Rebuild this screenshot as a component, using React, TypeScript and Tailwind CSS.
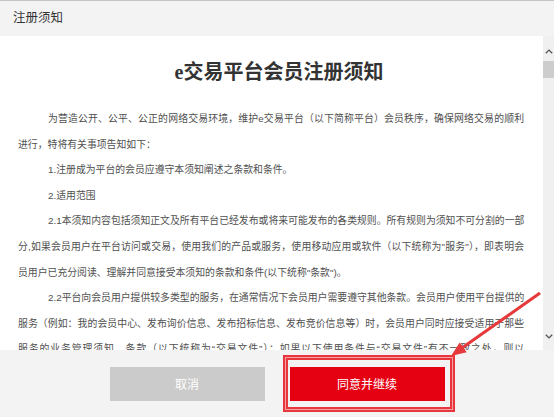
import React from "react";

type Line = { text: string; indent?: boolean; full?: boolean };

// agreement body, one entry per rendered line
const lines: Line[] = [
  { text: "为营造公开、公平、公正的网络交易环境，维护e交易平台（以下简称平台）会员秩序，确保网络交易的顺利", indent: true, full: true },
  { text: "进行，特将有关事项告知如下：" },
  { text: "1.注册成为平台的会员应遵守本须知阐述之条款和条件。", indent: true },
  { text: "2.适用范围", indent: true },
  { text: "2.1本须知内容包括须知正文及所有平台已经发布或将来可能发布的各类规则。所有规则为须知不可分割的一部", indent: true, full: true },
  { text: "分,如果会员用户在平台访问或交易，使用我们的产品或服务，使用移动应用或软件（以下统称为\"服务\"），即表明会", full: true },
  { text: "员用户已充分阅读、理解并同意接受本须知的条款和条件(以下统称\"条款\")。" },
  { text: "2.2平台向会员用户提供较多类型的服务，在通常情况下会员用户需要遵守其他条款。会员用户使用平台提供的", indent: true, full: true },
  { text: "服务（例如：我的会员中心、发布询价信息、发布招标信息、发布竞价信息等）时，会员用户同时应接受适用于那些", full: true },
  { text: "服务的业务管理须知、条款（以下统称为“交易文件”）；如果以下使用条件与“交易文件”有不一致之处，则以", full: true },
];

const Chevron = ({ down }: { down?: boolean }) => (
  <svg width="8" height="5" viewBox="0 0 8 5" className={down ? "rotate-180" : ""}>
    <path d="M0.8 4.3 L4 1.1 L7.2 4.3" fill="none" stroke="#555" strokeWidth="1.3" />
  </svg>
);

export default function App() {
  return (
    <div className="relative flex h-[417px] w-[554px] flex-col overflow-hidden border-t border-[#c4c4c4] bg-white font-['Liberation_Sans','Noto_Sans_CJK_SC',sans-serif]">
      {/* Header */}
      <div className="flex h-[35px] shrink-0 items-center bg-[#f3f3f3] px-[13px] text-[12.5px] text-[#333]">
        注册须知
      </div>

      {/* Scrollable body */}
      <div className="flex min-h-0 flex-1">
        <div className="flex-1 overflow-hidden pl-[18px] pr-[19px]">
          <h1 className="mt-[21px] h-[30px] pl-[16px] text-center font-['Liberation_Serif','Noto_Sans_CJK_SC',serif] text-[20px] font-bold leading-[30px] text-[#333]">
            e交易平台会员注册须知
          </h1>
          <div className="mt-[19px] text-[9.85px] text-[#505050]">
            {lines.map((line, i) => (
              <div
                key={i}
                className={
                  "h-[25.6px] whitespace-nowrap leading-[25.6px] " +
                  (line.indent ? "pl-[30px] " : "") +
                  (line.full ? "text-justify [text-align-last:justify]" : "")
                }
              >
                {line.text}
              </div>
            ))}
          </div>
        </div>

        {/* Scrollbar */}
        <div className="flex w-[11px] shrink-0 flex-col items-center bg-[#f0f0f0]">
          <div className="mt-[13px]">
            <Chevron />
          </div>
          <div className="mt-[7px] h-[17px] w-full bg-[#cdcdcd]" />
          <div className="mb-[11px] mt-auto">
            <Chevron down />
          </div>
        </div>
      </div>

      {/* Footer */}
      <div className="flex h-[67px] shrink-0 items-center justify-center gap-[25px] bg-[#f3f3f3] font-['Noto_Sans_CJK_SC',sans-serif] text-[12px] text-white">
        <button className="h-[34px] w-[155px] bg-[#cbcbcb]">取消</button>
        <div className="relative">
          <button className="h-[34px] w-[155px] bg-[#e50012]">同意并继续</button>
          <div className="pointer-events-none absolute -left-[7px] -top-[12px] h-[57px] w-[172px] border-2 border-[#e8363c] shadow-[inset_0_0_0_1px_#f3a3a5,inset_0_0_0_3px_#e8363c]" />
        </div>
      </div>

      {/* Pointer arrow */}
      <svg className="pointer-events-none absolute inset-0" width="554" height="417" viewBox="0 0 554 417">
        <line x1="540" y1="292" x2="463" y2="346.3" stroke="#e5393c" strokeWidth="3" />
        <polygon points="451,355 466.7,351.2 459.7,341.4" fill="#e5393c" />
      </svg>
    </div>
  );
}
